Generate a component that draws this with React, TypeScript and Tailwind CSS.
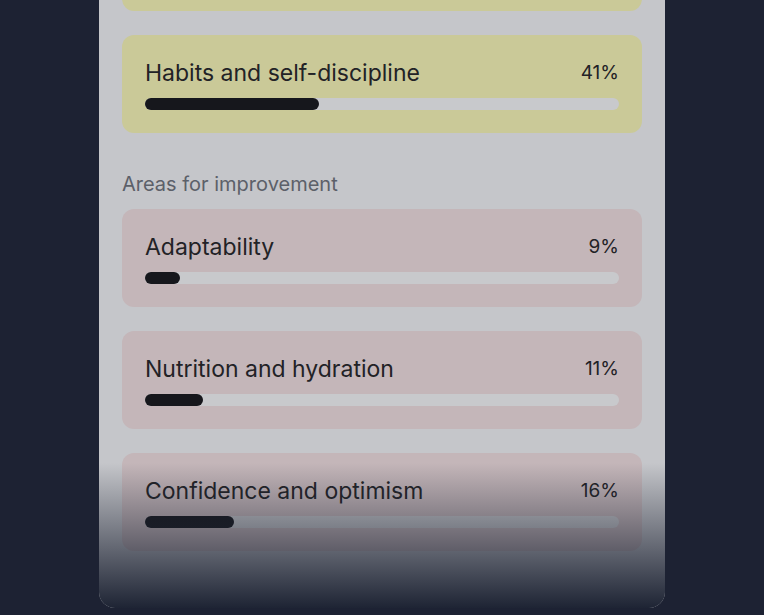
const strengths = [
  { name: 'Physical activity', pct: '52%', fill: 240 },
  { name: 'Habits and self-discipline', pct: '41%', fill: 174 },
];

const improvements = [
  { name: 'Adaptability', pct: '9%', fill: 35 },
  { name: 'Nutrition and hydration', pct: '11%', fill: 58 },
  { name: 'Confidence and optimism', pct: '16%', fill: 89 },
];

function TraitCard({ name, pct, fill, tone }: { name: string; pct: string; fill: number; tone: 'good' | 'bad' }) {
  return (
    <div className={`rounded-xl px-[23px] pt-6 pb-[23px] ${tone === 'good' ? 'bg-[#cac998]' : 'bg-[#c4b6b9]'}`}>
      <div className="flex items-center justify-between">
        <span className="text-[23px] leading-7 text-[#222226]">{name}</span>
        <span className="text-[19px] leading-7 text-[#222226]">{pct}</span>
      </div>
      <div className="mt-[11px] h-[12px] rounded-full bg-[#c8c9cc]">
        <div className="h-full rounded-full bg-[#16171c]" style={{ width: fill }} />
      </div>
    </div>
  );
}

export default function App() {
  return (
    <div className="h-[615px] overflow-hidden bg-[#1d2233] font-['Inter',sans-serif]">
      <div className="relative mx-auto -mt-[111px] h-[719px] w-[566px] overflow-hidden rounded-b-2xl bg-[#c5c6ca] px-[23px]">
        <div className="flex flex-col gap-6 pt-6">
          {strengths.map((s) => (
            <TraitCard key={s.name} {...s} tone="good" />
          ))}
        </div>
        <p className="mt-[37px] text-[20px] leading-7 text-[#5c6069]">Areas for improvement</p>
        <div className="mt-[11px] flex flex-col gap-6">
          {improvements.map((s) => (
            <TraitCard key={s.name} {...s} tone="bad" />
          ))}
        </div>
        <div className="absolute inset-x-0 bottom-0 h-[145px] bg-gradient-to-b from-[#1e2434]/0 to-[#1e2434]" />
      </div>
    </div>
  );
}
